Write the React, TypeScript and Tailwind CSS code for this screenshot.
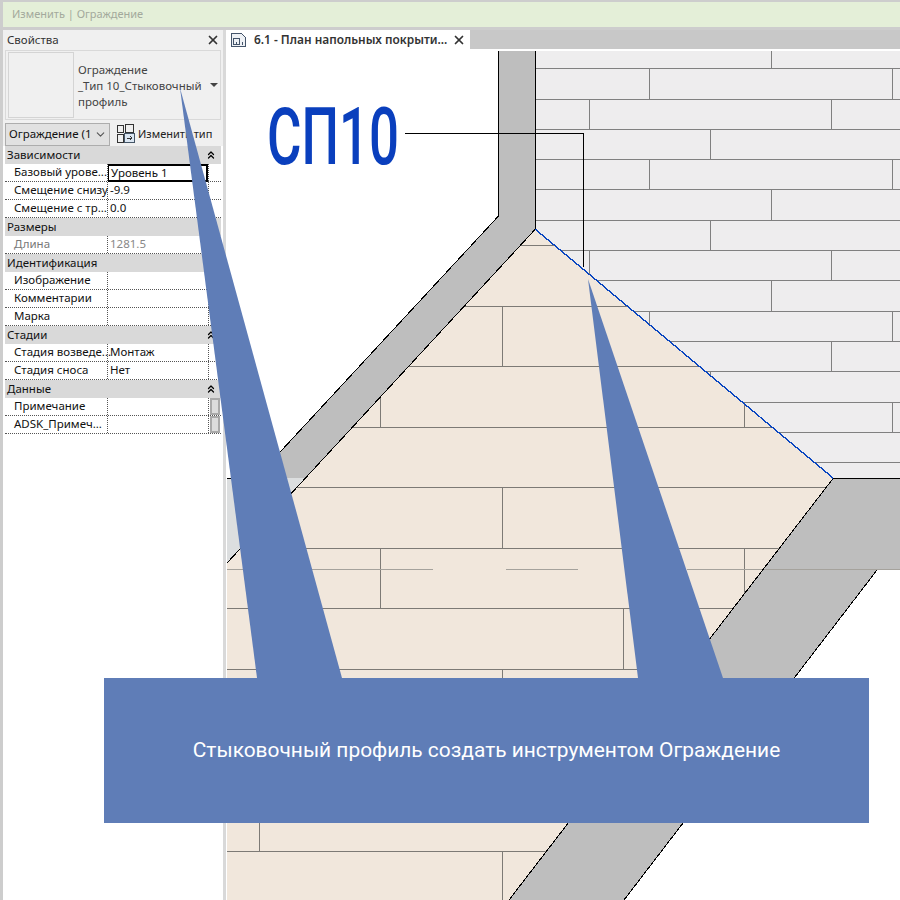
import { ChevronDown, ChevronsUp, X } from 'lucide-react';

const uiFont = "font-['Noto_Sans',sans-serif]";

type Row =
  | { kind: 'section'; label: string }
  | { kind: 'field'; label: string; value?: string; muted?: boolean; active?: boolean; thumb?: boolean };

const rows: Row[] = [
  { kind: 'section', label: 'Зависимости' },
  { kind: 'field', label: 'Базовый урове...', value: 'Уровень 1', active: true },
  { kind: 'field', label: 'Смещение снизу', value: '-9.9' },
  { kind: 'field', label: 'Смещение с тр...', value: '0.0' },
  { kind: 'section', label: 'Размеры' },
  { kind: 'field', label: 'Длина', value: '1281.5', muted: true },
  { kind: 'section', label: 'Идентификация' },
  { kind: 'field', label: 'Изображение' },
  { kind: 'field', label: 'Комментарии' },
  { kind: 'field', label: 'Марка' },
  { kind: 'section', label: 'Стадии' },
  { kind: 'field', label: 'Стадия возведе...', value: 'Монтаж' },
  { kind: 'field', label: 'Стадия сноса', value: 'Нет' },
  { kind: 'section', label: 'Данные' },
  { kind: 'field', label: 'Примечание', thumb: true },
  { kind: 'field', label: 'ADSK_Примеч...', thumb: true },
];

// plank joints of the grey floor: [x, y1, y2]
const greyJoints = [
  [771, 51, 68], [649, 68, 99], [892, 68, 99], [589, 99, 129], [831, 99, 129],
  [710, 129, 159], [649, 159, 189], [892, 159, 189], [771, 189, 220], [710, 220, 250],
  [589, 250, 280], [831, 250, 280], [771, 280, 311], [649, 311, 341], [892, 311, 341],
  [831, 341, 371], [710, 371, 402], [892, 402, 432],
];
const greyRows = [68, 99, 129, 159, 189, 220, 250, 280, 311, 341, 371, 402, 432, 462];

// plank joints of the beige floor
const beigeJoints = [
  [502, 306, 366], [380, 366, 427], [744, 366, 427], [502, 487, 548], [380, 548, 608],
  [744, 548, 608], [623, 608, 669], [502, 669, 729], [259, 790, 851], [502, 851, 900],
];
const beigeRows = [245, 306, 366, 427, 487, 548, 608, 669, 729, 790, 851];

function PropertyRow({ row }: { row: Row }) {
  if (row.kind === 'section') {
    return (
      <div className="flex h-[18px] items-center justify-between bg-[#d9d9d9] pl-[2px] pr-[4px] text-[11.5px] text-[#111]">
        <span>{row.label}</span>
        <ChevronsUp size={12} strokeWidth={2.5} className="text-black" />
      </div>
    );
  }
  return (
    <div className="flex h-[18px] border-b border-dotted border-[#555] bg-white text-[11.5px]">
      <div className={`w-[103px] shrink-0 whitespace-nowrap border-r border-dotted border-[#555] pl-[9px] leading-[16px] ${row.muted ? 'text-[#777]' : 'text-[#111]'}`}>
        {row.label}
      </div>
      <div
        className={`w-[100px] shrink-0 pl-[2px] ${row.muted ? 'text-[#888]' : 'text-[#111]'} ${
          row.active ? 'h-[18px] border-2 border-l border-black pl-[1px] leading-[14px]' : 'leading-[16px]'
        }`}
      >
        {row.value}
      </div>
      <div className="flex flex-1 justify-end border-l border-dotted border-[#555]">
        {row.thumb && <div className="mr-[1px] h-[17px] w-[10px] border-2 border-[#a9a9a9] bg-[#dcdcdc]" />}
      </div>
    </div>
  );
}

function PropertiesPanel() {
  return (
    <div className={`flex w-[220px] shrink-0 flex-col bg-white ${uiFont}`}>
      <div className="bg-[#f0f0f0] px-[2px]">
        <div className="flex h-[20px] items-center justify-between pl-[2px] pr-[1px] text-[11.5px] text-[#333]">
          <span>Свойства</span>
          <X size={14} strokeWidth={3} className="text-[#333]" />
        </div>
        <div className="flex h-[70px] items-center border border-[#d9d9d9] px-[2px]">
          <div className="h-[66px] w-[66px] shrink-0 border border-[#d4d4d4]" />
          <div className="ml-[4px] w-[128px] pt-[2px] text-[11.5px] leading-[16px] text-[#444]">
            <div>Ограждение</div>
            <div className="whitespace-nowrap">_Тип 10_Стыковочный</div>
            <div>профиль</div>
          </div>
          <div className="ml-[5px] h-0 w-0 border-x-[4px] border-t-[4px] border-x-transparent border-t-[#444]" />
        </div>
        <div className="mt-[2px] flex h-[24px] items-center">
          <div className="flex h-[23px] w-[105px] items-center justify-between border border-[#adadad] bg-[#e1e1e1] pl-[3px] pr-[2px] text-[11.5px] text-[#111]">
            <span className="whitespace-nowrap">Ограждение (1</span>
            <ChevronDown size={13} className="shrink-0 text-[#555]" />
          </div>
          <svg width="18" height="20" viewBox="0 0 18 20" fill="none" stroke="#333" strokeWidth="1" className="ml-[7px]" shapeRendering="crispEdges">
            <rect x="0.5" y="1.5" width="6" height="7" />
            <rect x="8.5" y="0.5" width="8" height="8" />
            <rect x="0.5" y="10.5" width="6" height="8" />
            <rect x="7.5" y="9.5" width="10" height="9" fill="#dbe6f2" stroke="#456" />
            <path d="M10 14h5M13 12l2 2-2 2" />
          </svg>
          <span className="ml-[3px] whitespace-nowrap text-[11px] text-[#222]">Изменить тип</span>
        </div>
      </div>
      <div className="px-[2px]">
        {rows.map((row) => (
          <PropertyRow key={row.label} row={row} />
        ))}
      </div>
    </div>
  );
}

function FloorPlan() {
  return (
    <svg viewBox="227 51 673 849" className="block h-[849px] w-[673px]" shapeRendering="crispEdges">
      <defs>
        <clipPath id="beige-floor">
          <polygon points="535,229 833,478 509,900 227,900 227,563" />
        </clipPath>
      </defs>

      <polygon points="535,51 900,51 900,478 833,478 535,229" fill="#eeedee" />
      <g stroke="#808080" strokeWidth="1">
        {greyRows.map((y) => (
          <line key={y} x1="535" x2="900" y1={y + 0.5} y2={y + 0.5} />
        ))}
        {greyJoints.map(([x, a, b]) => (
          <line key={`${x}-${a}`} x1={x + 0.5} x2={x + 0.5} y1={a} y2={b} />
        ))}
      </g>

      <polygon points="535,229 833,478 509,900 227,900 227,563" fill="#f1e7dc" />
      <g stroke="#7d7a75" strokeWidth="1" clipPath="url(#beige-floor)">
        {beigeRows.map((y) => (
          <line key={y} x1="227" x2="900" y1={y + 0.5} y2={y + 0.5} />
        ))}
        {beigeJoints.map(([x, a, b]) => (
          <line key={`${x}-${a}`} x1={x + 0.5} x2={x + 0.5} y1={a} y2={b} />
        ))}
      </g>

      {/* walls */}
      <polygon points="498,51 535,51 535,229 305,478 256,478 498,216" fill="#bebebe" />
      <polygon points="227,478 305,478 227,563" fill="#dcdedf" />
      <polygon points="833,478 900,478 900,570 877,570 624,900 509,900" fill="#bebebe" />

      <g stroke="#a5a29c" strokeWidth="1">
        <line x1="227" x2="433" y1="569.5" y2="569.5" />
        <line x1="506" x2="578" y1="569.5" y2="569.5" />
        <line x1="687" x2="900" y1="569.5" y2="569.5" />
      </g>

      <g stroke="#000" strokeWidth="1" fill="none">
        <polyline points="498.5,51 498.5,216 256,478 227,478" />
        <polyline points="535.5,51 535.5,229 227,563" />
        <polyline points="900,478.5 833,478.5 509,900" />
        <line x1="877" y1="570" x2="624" y2="900" />
        <polyline points="405,133.5 583.5,133.5 583.5,267" />
      </g>
      <line x1="535" y1="229" x2="833" y2="478" stroke="#0a46c0" strokeWidth="1.4" />
    </svg>
  );
}

export default function App() {
  return (
    <div className="relative h-[900px] w-[900px] overflow-hidden bg-[#cdcdcd] pt-[2px]">
      <div className={`ml-[3px] flex h-[25px] items-center bg-[#e4efd8] pl-[9px] text-[11px] text-[#a3a99c] ${uiFont}`}>
        Изменить | Ограждение
      </div>

      <div className="mt-[3px] flex h-[870px] pl-[3px]">
        <PropertiesPanel />
        <div className="w-[3px] bg-[#d9d9d9]" />
        <div className="w-[1px] bg-white" />

        <div className="relative flex w-[673px] flex-col bg-white">
          <div className="flex h-[19px] bg-[#c8c8c8]">
            <div className={`flex w-[243px] items-center bg-white pl-[4px] pr-[4px] text-[11.9px] font-semibold text-[#333] ${uiFont}`}>
              <svg width="15" height="14" viewBox="0 0 15 14" fill="none" stroke="#44546a" strokeWidth="1" shapeRendering="crispEdges">
                <path d="M0.5 0.5H10.5L14.5 4.5V13.5H0.5Z" fill="#eef1f5" />
                <path d="M2.5 11.5V5.5H8.5V11.5H2.5ZM5.5 8.5V11.5M11.5 8.5V11.5" />
              </svg>
              <span className="ml-[8px] flex-1 whitespace-nowrap">6.1 - План напольных покрыти...</span>
              <X size={14} strokeWidth={3} className="text-[#333]" />
            </div>
          </div>
          <div className="h-[2px] bg-white" />
          <FloorPlan />
          {/* tag label on the plan */}
          <div className="absolute left-[40px] top-[67px] origin-left scale-x-[0.66] whitespace-nowrap font-['Roboto',sans-serif] text-[80px] font-medium leading-[80px] text-[#0a3fbd]">
            СП10
          </div>
        </div>
      </div>

      {/* callout wedges and banner */}
      <svg viewBox="0 0 900 900" className="pointer-events-none absolute inset-0 h-[900px] w-[900px]">
        <polygon points="180,88 342,678 257,678" fill="#5f7db7" />
        <polygon points="588,279 723,678 638,678" fill="#5f7db7" />
      </svg>
      <div className="absolute left-[104px] top-[678px] flex h-[145px] w-[765px] items-center justify-center bg-[#5f7db7] font-['Roboto',sans-serif] text-[20.9px] text-white">
        Стыковочный профиль создать инструментом Ограждение
      </div>
    </div>
  );
}
